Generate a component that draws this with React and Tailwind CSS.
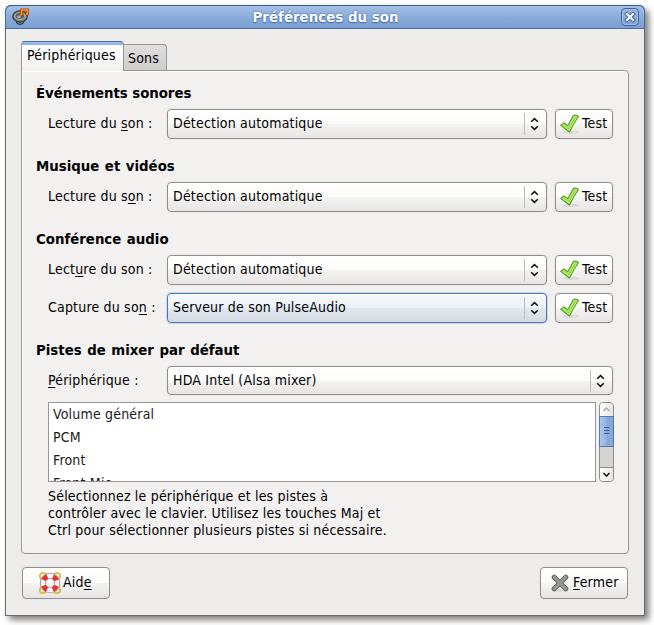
import React from "react";

const FACE = "bg-[linear-gradient(#ffffff,#fbfbfa_50%,#f3f3f2_51%,#e6e5e3)]";
const BUTTON =
  "flex items-center rounded-[4px] border border-[#8f8e8c] tracking-[0.19px] shadow-[0_0_0_1px_#eae9e7] " + FACE;

function Arrows() {
  return (
    <svg width="9" height="14" viewBox="0 0 9 14" fill="none" stroke="#111" strokeWidth="1.5" className="shrink-0">
      <path d="M1.2 4.7 4.5 1.6 7.8 4.7M1.2 9.3 4.5 12.4 7.8 9.3" />
    </svg>
  );
}

function Combo({ children, focused, short }) {
  return (
    <div
      className={
        "flex flex-1 items-center rounded-[4px] border pl-[5px] pr-[7px] " +
        (short ? "h-[29px] " : "h-[30px] ") +
        (focused
          ? "border-[#5478aa] bg-[linear-gradient(#f8fafd,#eaf0f7_50%,#e2e8f0_51%,#d5dae1)] shadow-[0_0_0_1px_#c5d5ea]"
          : "border-[#8f8e8c] shadow-[0_0_0_1px_#eae9e7] " + FACE)
      }
    >
      <span className={"relative flex-1 " + (short ? "top-0" : "-top-px")}>{children}</span>
      <span className="mr-[5px] h-[22px] w-px bg-[#bdbcba]" />
      <Arrows />
    </div>
  );
}

function Check() {
  return (
    <svg width="20" height="20" viewBox="0 0 20 20" className="shrink-0">
      <ellipse cx="11" cy="18.4" rx="8" ry="1.5" fill="#d9d9d7" />
      <path
        d="M.8 11.4 3.8 9 7.8 11.8 13.4 1.6Q14.8 .2 18.4 2.4Q13.6 9.5 9.4 18Q5 14.8 .8 11.4Z"
        fill="#8edb3f"
        stroke="#559c1e"
        strokeWidth="1.1"
        strokeLinejoin="round"
      />
      <path d="M2.6 11.4 4 10.4 8.2 13.5 14.3 2.5 16.8 3 9.2 16.2Z" fill="none" stroke="#c4f093" strokeWidth=".9" />
    </svg>
  );
}

function TestButton() {
  return (
    <button className={"ml-2 h-[30px] w-[58px] pl-[4px] " + BUTTON}>
      <Check />
      <span className="relative -top-px ml-[2px]">Test</span>
    </button>
  );
}

function Heading({ children, first }) {
  return (
    <h2
      className={
        "mb-[7px] h-[17px] font-['DejaVu_Sans',sans-serif] text-[13.33px] font-bold leading-[17px] " +
        (first ? "mt-[14px] tracking-[-0.04px]" : "mt-[19px] tracking-normal [word-spacing:0.9px]")
      }
    >
      {children}
    </h2>
  );
}

function Row({ label, children, className = "", low }) {
  return (
    <div className={"ml-3 flex items-center " + className}>
      <label className={"relative w-[119px] shrink-0 " + (low ? "top-0" : "-top-px")}>{label}</label>
      {children}
    </div>
  );
}

function Key({ children }) {
  return <span className="underline decoration-1 underline-offset-2">{children}</span>;
}

function SpeakerIcon() {
  return (
    <svg width="18" height="18" viewBox="0 0 18 18" className="shrink-0">
      <path d="M3.2 11 5 15.5Q8 17.5 11 15.5L13.4 11Z" fill="#7c807a" stroke="#2e3436" />
      <ellipse cx="8" cy="8.4" rx="7.2" ry="5.6" fill="#888a85" stroke="#3a3f40" strokeWidth="1.3" />
      <ellipse cx="7.8" cy="8" rx="4.8" ry="3.5" fill="#5b605e" stroke="#babdb6" strokeWidth=".8" />
      <ellipse cx="7" cy="8.8" rx="1.9" ry="1.4" fill="#b4b7b1" />
      <path d="M9.6 7V2H15.4V6.2H13.8M9.8 6.8H7.8" fill="none" stroke="#b14a00" strokeWidth="2.8" />
      <path d="M9.6 7V2H15.4V6.2H13.8M9.8 6.8H7.8" fill="none" stroke="#ff8a26" strokeWidth="1.3" />
    </svg>
  );
}

function HelpIcon() {
  return (
    <svg width="22" height="22" viewBox="0 0 22 22" className="shrink-0">
      <g fill="none" stroke="#c4a000" strokeWidth="1.5">
        <circle cx="4" cy="4" r="3.1" />
        <circle cx="18" cy="4" r="3.1" />
        <circle cx="4" cy="18" r="3.1" />
        <circle cx="18" cy="18" r="3.1" />
      </g>
      <g fill="none" stroke="#f5e47a" strokeWidth=".6">
        <circle cx="4" cy="4" r="3.1" />
        <circle cx="18" cy="4" r="3.1" />
        <circle cx="4" cy="18" r="3.1" />
        <circle cx="18" cy="18" r="3.1" />
      </g>
      <circle cx="11" cy="11" r="7.1" fill="none" stroke="#8e8e8b" strokeWidth="6.2" />
      <circle cx="11" cy="11" r="7.1" fill="none" stroke="#f4f4f2" strokeWidth="4.6" />
      <circle
        cx="11"
        cy="11"
        r="7.1"
        fill="none"
        stroke="#ed2f35"
        strokeWidth="4.8"
        strokeDasharray="5.4 5.753"
        strokeDashoffset="-2.88"
      />
    </svg>
  );
}

function CloseIcon() {
  return (
    <svg width="18" height="18" viewBox="0 0 18 18" className="shrink-0">
      <ellipse cx="9" cy="16.3" rx="8" ry="1.4" fill="#d6d6d4" />
      <path d="M3.2 3.2 14.8 14.8M14.8 3.2 3.2 14.8" stroke="#5c5e5a" strokeWidth="5" strokeLinecap="round" />
      <path d="M3.2 3.2 14.8 14.8M14.8 3.2 3.2 14.8" stroke="#969894" strokeWidth="3.2" strokeLinecap="round" />
    </svg>
  );
}

function Scrollbar() {
  return (
    <div className="ml-[3px] flex h-20 w-[15px] flex-col rounded-[4px] border border-[#8f8e8c] bg-[#d5d4d2]">
      <div className="flex h-[13px] items-center justify-center rounded-t-[3px] bg-[linear-gradient(90deg,#fff,#e6e5e3)]">
        <svg width="7" height="5" viewBox="0 0 7 5" fill="none" stroke="#aaa9a7" strokeWidth="1.4">
          <path d="M.5 4 3.5 1 6.5 4" />
        </svg>
      </div>
      <div className="-mx-px flex h-[31px] flex-col items-center justify-center gap-[2px] border border-[#5478aa] bg-[linear-gradient(90deg,#a9c6ec,#96b6e2_45%,#86a9da_55%,#83a6d8)] pb-[2px]">
        <span className="h-px w-[5px] bg-[#3c5f92]" />
        <span className="h-px w-[5px] bg-[#3c5f92]" />
        <span className="h-px w-[5px] bg-[#3c5f92]" />
      </div>
      <div className="h-5" />
      <div className="flex flex-1 items-center justify-center rounded-b-[3px] border-t border-[#8f8e8c] bg-[linear-gradient(90deg,#fff,#e6e5e3)]">
        <svg width="7" height="5" viewBox="0 0 7 5" fill="none" stroke="#111" strokeWidth="1.5">
          <path d="M.5 1 3.5 4 6.5 1" />
        </svg>
      </div>
    </div>
  );
}

export default function App() {
  return (
    <div className="h-[625px] w-[654px] overflow-hidden bg-white p-[5px] font-['DejaVu_Sans_Condensed','DejaVu_Sans',sans-serif] text-[14px] leading-[17px] tracking-[0.19px] text-black">
      <div className="flex h-[611px] w-[640px] flex-col rounded-t-[6px] border border-[#6b6a68] border-t-[#3d5a86] bg-[#edeceb] shadow-[4px_4px_6px_rgba(0,0,0,0.5)]">
        <header className="-mx-px -mt-px flex h-6 shrink-0 items-center rounded-t-[6px] border border-[#4a6c9f] border-t-[#3d5a86] bg-[linear-gradient(#a5c1e8,#94b3df_30%,#86a9d8_60%,#7a9fd0)] pl-[6px] pr-[5px] text-white">
          <SpeakerIcon />
          <h1 className="flex-1 text-center font-['DejaVu_Sans',sans-serif] text-[13.33px] font-bold tracking-[0.05px] [text-shadow:0_0_2px_#3f659b,0_1px_1px_#4a70a6]">
            Préférences du son
          </h1>
          <button className="flex h-[18px] w-[18px] items-center justify-center rounded-[4px] border border-[#45689c] shadow-[inset_0_0_0_1px_#9ebce4]">
            <svg width="12" height="12" viewBox="0 0 12 12" strokeLinecap="square">
              <path d="M3 3 9 9M9 3 3 9" stroke="#45689c" strokeWidth="4" />
              <path d="M3 3 9 9M9 3 3 9" stroke="#fff" strokeWidth="2" />
            </svg>
          </button>
        </header>

        <nav className="ml-[15px] mt-3 flex h-[29px] items-end">
          <div className="relative z-10 -mb-px h-[30px] w-[103px] rounded-t-[4px] border border-b-0 border-[#979694] border-t-[#4a6c9f] bg-[linear-gradient(#a3c0ea_0,#8bb0e2_3px,#fff_3px,#f2f1f0)] pl-[5px] pt-[5px]">
            Périphériques
          </div>
          <div className="h-[26px] w-[43px] rounded-tr-[4px] border border-b-0 border-l-0 border-[#979694] bg-[linear-gradient(#dfdedc,#cfcecc)] pl-1 pt-[5px]">
            Sons
          </div>
        </nav>

        <main className="ml-[15px] h-[484px] w-[608px] shrink-0 rounded-[4px] rounded-tl-none border border-[#979694] bg-[#f2f1f0] pl-[14px] pr-[15px] shadow-[inset_1px_1px_0_#fff]">
          <Heading first>Événements sonores</Heading>
          <Row label={<>Lecture du <Key>s</Key>on :</>}>
            <Combo>Détection automatique</Combo>
            <TestButton />
          </Row>

          <Heading>Musique et vidéos</Heading>
          <Row label={<>Lecture du s<Key>o</Key>n :</>}>
            <Combo>Détection automatique</Combo>
            <TestButton />
          </Row>

          <Heading>Conférence audio</Heading>
          <Row label={<>Lect<Key>u</Key>re du son :</>}>
            <Combo>Détection automatique</Combo>
            <TestButton />
          </Row>
          <Row className="mt-2" label={<>Capture du so<Key>n</Key> :</>}>
            <Combo focused>Serveur de son PulseAudio</Combo>
            <TestButton />
          </Row>

          <Heading>Pistes de mixer par défaut</Heading>
          <Row low label={<><Key>P</Key>ériphérique :</>}>
            <Combo short>HDA Intel (Alsa mixer)</Combo>
          </Row>

          <div className="-mr-px ml-3 mt-[7px] flex">
            <ul className="h-20 flex-1 overflow-hidden border border-[#979694] bg-white pl-1 leading-[23px] text-[#1a1a1a]">
              <li>Volume général</li>
              <li>PCM</li>
              <li>Front</li>
              <li>Front Mic</li>
            </ul>
            <Scrollbar />
          </div>
          <p className="ml-3 mt-[6px] whitespace-nowrap">
            Sélectionnez le périphérique et les pistes à<br />
            contrôler avec le clavier. Utilisez les touches Maj et<br />
            Ctrl pour sélectionner plusieurs pistes si nécessaire.
          </p>
        </main>

        <footer className="ml-4 mr-4 mt-[13px] flex justify-between">
          <button className={"h-8 w-[88px] pl-4 " + BUTTON}>
            <HelpIcon />
            <span className="relative -top-px ml-[2px]">Aid<Key>e</Key></span>
          </button>
          <button className={"h-8 w-[88px] pl-[10px] " + BUTTON}>
            <CloseIcon />
            <span className="relative -top-px ml-1"><Key>F</Key>ermer</span>
          </button>
        </footer>
      </div>
    </div>
  );
}
